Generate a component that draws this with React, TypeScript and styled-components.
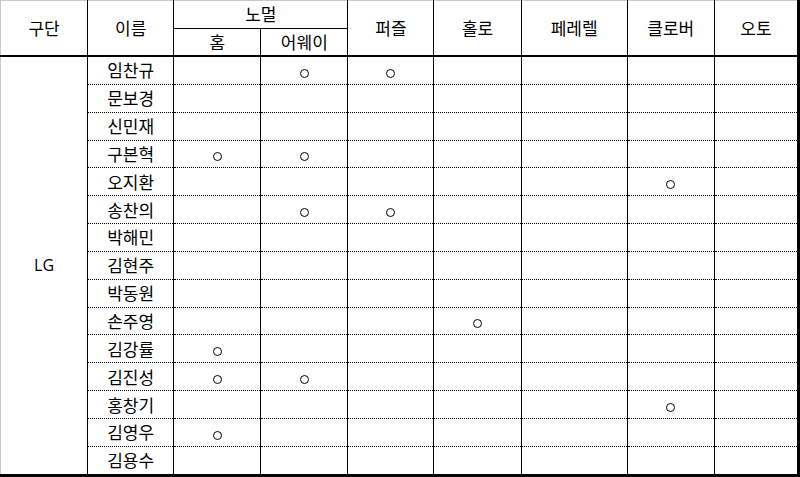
import React from 'react';
import styled, { createGlobalStyle } from 'styled-components';

const GlobalStyle = createGlobalStyle`
    html, body {
        margin: 0;
        padding: 0;
        background: #fff;
    }
    body {
        font-family: 'Noto Sans CJK KR', 'Noto Sans', sans-serif;
        color: #000;
    }
`;

const Sheet = styled.table`
    border-collapse: collapse;
    table-layout: fixed;
    width: 800px;
    border-top: 1px solid #c8c8c8;
    border-left: 1px solid #c8c8c8;
    border-right: 3px solid #000;
`;

const HeadCell = styled.th<{ $top?: boolean }>`
    font-weight: 400;
    font-size: 17px;
    padding: 0;
    height: 26.5px;
    line-height: 20px;
    text-align: center;
    border-left: 1px solid #000;
    border-right: 1px solid #000;
    border-top: ${p => (p.$top ? '1px solid #000' : 'none')};
    &:first-child {
        border-left: none;
    }
`;

const HeadRow = styled.tr<{ $last?: boolean }>`
    border-bottom: ${p => (p.$last ? '2px solid #000' : '1px solid #000')};
`;

const Row = styled.tr<{ $last?: boolean }>`
    border-bottom: ${p => (p.$last ? '3px solid #000' : '1px dotted #000')};
`;

const GroupCell = styled.td`
    font-family: 'Open Sans', 'Noto Sans', sans-serif;
    font-size: 16px;
    text-align: center;
    vertical-align: middle;
    padding: 0;
    border-right: 1px solid #000;
    border-bottom: 3px solid #000;
`;

const NameCell = styled.td`
    font-size: 17px;
    height: 26.85px;
    line-height: 20px;
    padding: 0;
    text-align: center;
    border-right: 1px solid #000;
`;

const MarkCell = styled.td`
    padding: 0;
    text-align: center;
    vertical-align: middle;
    border-right: 1px solid #000;
`;

const Mark = styled.span`
    display: inline-block;
    width: 7px;
    height: 7px;
    border: 1.5px solid #000;
    border-radius: 50%;
    vertical-align: middle;
`;

const columns = ['home', 'away', 'puzzle', 'holo', 'parallel', 'clover', 'auto'] as const;
type Col = (typeof columns)[number];

const players: { name: string; marks: Col[] }[] = [
    { name: '임찬규', marks: ['away', 'puzzle'] },
    { name: '문보경', marks: [] },
    { name: '신민재', marks: [] },
    { name: '구본혁', marks: ['home', 'away'] },
    { name: '오지환', marks: ['clover'] },
    { name: '송찬의', marks: ['away', 'puzzle'] },
    { name: '박해민', marks: [] },
    { name: '김현주', marks: [] },
    { name: '박동원', marks: [] },
    { name: '손주영', marks: ['holo'] },
    { name: '김강률', marks: ['home'] },
    { name: '김진성', marks: ['home', 'away'] },
    { name: '홍창기', marks: ['clover'] },
    { name: '김영우', marks: ['home'] },
    { name: '김용수', marks: [] },
];

const widths = [87, 86, 87, 87, 86, 87, 106, 87, 84];

export default function App() {
    return (
        <>
            <GlobalStyle />
            <Sheet>
                <colgroup>
                    {widths.map((w, i) => (
                        <col key={i} style={{ width: w }} />
                    ))}
                </colgroup>
                <thead>
                    <HeadRow>
                        <HeadCell rowSpan={2}>구단</HeadCell>
                        <HeadCell rowSpan={2}>이름</HeadCell>
                        <HeadCell colSpan={2}>노멀</HeadCell>
                        <HeadCell rowSpan={2}>퍼즐</HeadCell>
                        <HeadCell rowSpan={2}>홀로</HeadCell>
                        <HeadCell rowSpan={2}>페레렐</HeadCell>
                        <HeadCell rowSpan={2}>클로버</HeadCell>
                        <HeadCell rowSpan={2}>오토</HeadCell>
                    </HeadRow>
                    <HeadRow $last>
                        <HeadCell $top>홈</HeadCell>
                        <HeadCell $top>어웨이</HeadCell>
                    </HeadRow>
                </thead>
                <tbody>
                    {players.map((p, i) => (
                        <Row key={p.name} $last={i === players.length - 1}>
                            {i === 0 && <GroupCell rowSpan={players.length}>LG</GroupCell>}
                            <NameCell>{p.name}</NameCell>
                            {columns.map(c => (
                                <MarkCell key={c}>{p.marks.includes(c) && <Mark />}</MarkCell>
                            ))}
                        </Row>
                    ))}
                </tbody>
            </Sheet>
        </>
    );
}
